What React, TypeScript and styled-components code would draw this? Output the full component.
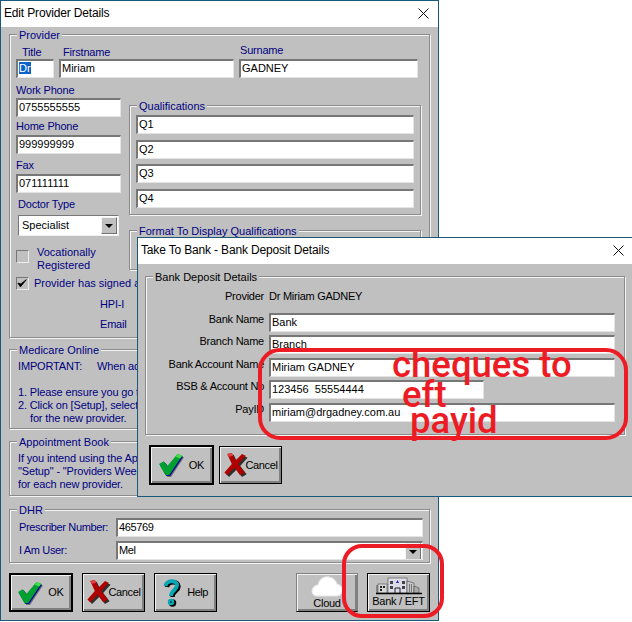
import * as React from 'react';
import styled, { createGlobalStyle } from 'styled-components';

const Page = createGlobalStyle`
  html, body {
    margin: 0;
    padding: 0;
    background: #fff;
    overflow: hidden;
  }
  body {
    font-family: "Liberation Sans", Arial, sans-serif;
    font-size: 11px;
    line-height: 13px;
  }
`;

const Desktop = styled.div`
  position: relative;
  width: 632px;
  height: 622px;
  overflow: hidden;
  background: #fff;
`;

const Win = styled.div<{ $x: number; $y: number; $w: number; $h: number }>`
  position: absolute;
  left: ${({ $x }) => $x}px;
  top: ${({ $y }) => $y}px;
  width: ${({ $w }) => $w}px;
  height: ${({ $h }) => $h}px;
  box-sizing: border-box;
  border: 1px solid #1a5a78;
  background: #c0c0c0;
  display: flex;
  flex-direction: column;
`;

const TitleBar = styled.div`
  box-sizing: border-box;
  flex: 0 0 26px;
  background: #fff;
  color: #000;
  display: flex;
  align-items: center;
  justify-content: space-between;
  padding: 0 9px 2px 3px;
  font-size: 12px;
  letter-spacing: -0.16px;
`;

const MainBody = styled.div`
  display: flex;
  flex-direction: column;
  padding: 7px 8px 0 8px;
`;

const Group = styled.div<{ $h: number; $gap?: number; $ink?: string }>`
  position: relative;
  box-sizing: border-box;
  height: ${({ $h }) => $h}px;
  margin-top: ${({ $gap }) => $gap || 0}px;
  border: 1px solid #8c8c8c;
  box-shadow: inset 1px 1px 0 #f4f4f4, 1px 1px 0 #f4f4f4;
  color: ${({ $ink }) => $ink || '#000080'};
`;

const Legend = styled.span`
  position: absolute;
  left: 7px;
  top: -6px;
  padding: 0 2px;
  background: #c0c0c0;
  white-space: nowrap;
`;

const NameRow = styled.div`
  display: flex;
  align-items: flex-end;
  gap: 5px;
  padding: 9px 0 0 6px;
`;

const NameCol = styled.div<{ $w: number }>`
  width: ${({ $w }) => $w}px;
  flex: none;
`;

const Caption = styled.div<{ $indent?: number; $above?: number; $below?: number }>`
  height: 13px;
  margin: ${({ $above }) => $above || 0}px 0 ${({ $below }) => $below || 0}px ${({ $indent }) => $indent || 0}px;
  letter-spacing: -0.2px;
  white-space: nowrap;
`;

const Field = styled.div<{ $w?: number; $h?: number }>`
  box-sizing: border-box;
  width: ${({ $w }) => ($w ? `${$w}px` : '100%')};
  height: ${({ $h }) => $h || 19}px;
  flex: none;
  border-style: solid;
  border-width: 2px 1px 1px 2px;
  border-color: #777 #e4e4e4 #e4e4e4 #777;
  background: #fff;
  color: #000;
  padding: 1px 0 0 1px;
  white-space: nowrap;
  overflow: hidden;
  position: relative;
`;

const Selected = styled.span`
  background: #0a64c8;
  color: #fff;
`;

const Columns = styled.div`
  display: flex;
  padding: 6px 0 0 6px;
`;

const LeftCol = styled.div`
  width: 113px;
  flex: none;
`;

const RightCol = styled.div`
  width: 292px;
  padding-top: 21px;
`;

const QualList = styled.div`
  display: flex;
  flex-direction: column;
  gap: 5.67px;
  padding: 9px 6px 0;
`;

const DropBox = styled.div`
  box-sizing: border-box;
  width: 101px;
  height: 21px;
  margin-left: 2px;
  border-style: solid;
  border-width: 1px;
  border-color: #777 #f0f0f0 #f0f0f0 #777;
  background: #fff;
  color: #000;
  display: flex;
  align-items: center;
  justify-content: space-between;
  padding-left: 3px;
  padding-right: 1px;
`;

const DropButton = styled.div<{ $w?: number }>`
  box-sizing: border-box;
  width: ${({ $w }) => $w || 16}px;
  height: 17px;
  background: #c0c0c0;
  border-style: solid;
  border-width: 1px;
  border-color: #f4f4f4 #707070 #707070 #f4f4f4;
  display: flex;
  align-items: center;
  justify-content: center;
  &::after {
    content: '';
    border-style: solid;
    border-width: 4px 4px 0;
    border-color: #000 transparent transparent;
  }
`;

const CheckRow = styled.div<{ $above: number; $gap: number; $align: string }>`
  display: flex;
  align-items: ${({ $align }) => $align};
  gap: ${({ $gap }) => $gap}px;
  margin-top: ${({ $above }) => $above}px;
  white-space: nowrap;
`;

const CheckBox = styled.div<{ $raise?: number }>`
  box-sizing: border-box;
  width: 13px;
  height: 13px;
  flex: none;
  margin-top: ${({ $raise }) => $raise || 0}px;
  border-style: solid;
  border-width: 1px;
  border-color: #777 #eee #eee #777;
  display: flex;
  align-items: center;
  justify-content: center;
`;

const HpiRow = styled.div<{ $top: number }>`
  display: flex;
  align-items: center;
  margin-top: ${({ $top }) => $top}px;
  padding-left: 90px;
`;

const HpiLabel = styled.div`
  width: 37px;
  letter-spacing: -0.2px;
`;

const Notes = styled.div`
  padding: 10px 0 0 8px;
  letter-spacing: -0.15px;
  white-space: nowrap;
`;

const NoteLine = styled.div<{ $indent?: number }>`
  height: 13px;
  padding-left: ${({ $indent }) => $indent || 0}px;
`;

const TabSpan = styled.span`
  display: inline-block;
  width: 79px;
`;

const DhrGrid = styled.div`
  display: grid;
  grid-template-columns: 97px 307px;
  grid-auto-rows: 19px;
  row-gap: 4px;
  align-items: center;
  padding: 8px 0 0 9px;
  letter-spacing: -0.35px;
`;

const FieldEnd = styled.div`
  position: absolute;
  right: 1px;
  top: 0;
`;

const ActionRow = styled.div<{ $pad?: number; $top: number; $gap: number }>`
  display: flex;
  align-items: center;
  gap: ${({ $gap }) => $gap}px;
  margin-top: ${({ $top }) => $top}px;
  padding-left: ${({ $pad }) => $pad || 0}px;
`;

const Btn = styled.div<{ $w: number; $h?: number; $main?: boolean; $dim?: boolean; $stack?: boolean; $push?: boolean }>`
  box-sizing: border-box;
  width: ${({ $w }) => $w}px;
  height: ${({ $h }) => $h || 39}px;
  flex: none;
  margin-left: ${({ $push }) => ($push ? 'auto' : 0)};
  background: #c0c0c0;
  color: #000;
  border: ${({ $main }) => ($main ? 2 : 1)}px solid #000;
  border-color: ${({ $dim }) => ($dim ? '#808080 #808080 #000 #808080' : '#000')};
  box-shadow: inset 1px 1px 0 #f2f2f2, inset -2px -2px 0 #808080;
  display: flex;
  flex-direction: ${({ $stack }) => ($stack ? 'column' : 'row')};
  align-items: center;
  justify-content: center;
  gap: ${({ $stack }) => ($stack ? 0 : 2)}px;
  letter-spacing: -0.25px;
  white-space: nowrap;
`;

const OkLabel = styled.span`
  margin-left: 3px;
`;

const CancelLabel = styled.span`
  margin-left: -4px;
  letter-spacing: -0.4px;
`;

const HelpLabel = styled.span`
  margin-left: 4px;
  letter-spacing: -0.5px;
`;

const BankGroupWrap = styled.div`
  padding: 12px 8px 0 7px;
`;

const BankGrid = styled.div`
  display: grid;
  grid-template-columns: 118px 346px;
  grid-auto-rows: 19px;
  column-gap: 5px;
  row-gap: 3.5px;
  padding-top: 13px;
`;

const BankLabel = styled.div`
  text-align: right;
  letter-spacing: -0.25px;
  white-space: nowrap;
`;

const BankValue = styled.div`
  letter-spacing: -0.25px;
  white-space: nowrap;
`;

const Ring = styled.div<{ $x: number; $y: number; $w: number; $h: number; $r: number }>`
  position: absolute;
  left: ${({ $x }) => $x}px;
  top: ${({ $y }) => $y}px;
  width: ${({ $w }) => $w}px;
  height: ${({ $h }) => $h}px;
  box-sizing: border-box;
  border: 4px solid #ed1c24;
  border-radius: ${({ $r }) => $r}px;
`;

const Scrawl = styled.div<{ $x: number; $y: number }>`
  position: absolute;
  left: ${({ $x }) => $x}px;
  top: ${({ $y }) => $y}px;
  font-family: Roboto, "Noto Sans", sans-serif;
  font-size: 36.5px;
  line-height: 36px;
  font-weight: 500;
  color: #ed1c24;
  white-space: nowrap;
`;

const CloseIcon = () => (
  <svg width="11" height="11" viewBox="0 0 11 11">
    <path d="M0.5 0.5L10.5 10.5M10.5 0.5L0.5 10.5" stroke="#111" strokeWidth="1" fill="none" />
  </svg>
);

const TickMark = () => (
  <svg width="13" height="11" viewBox="0 0 13 11">
    <path d="M1 5L4 9.5L11 1L4.5 6Z" fill="#000" stroke="#000" strokeWidth="1" />
  </svg>
);

const tickShape = '0,12 5,9 9,14 20,1 25,3 11,24 7,24';

const OkIcon = () => (
  <svg width="25" height="24" viewBox="0 0 27 26">
    <polygon points={tickShape} transform="translate(2 2)" fill="#707070" />
    <polygon points={tickShape} transform="translate(1 1)" fill="#0000a0" />
    <polygon points={tickShape} fill="#00a030" />
    <path d="M20 1L25 3L23 6L18 4Z" fill="#40e040" />
  </svg>
);

const crossShape = '3,1 8,0 12,8 19,1 23,3 15,12 22,21 17,24 11,16 3,24 0,21 8,12';

const CancelIcon = () => (
  <svg width="24" height="25" viewBox="0 0 25 27">
    <polygon points={crossShape} transform="translate(2 2)" fill="#303030" />
    <polygon points={crossShape} fill="#b00000" />
    <path d="M3 1L8 0L9.5 3L5 4Z" fill="#e04040" />
  </svg>
);

const HelpIcon = () => (
  <svg width="18" height="28" viewBox="0 0 18 28">
    <g fill="none" strokeWidth="4.5" transform="translate(1.5 1)">
      <path d="M2.5 7C3 1 14 0.5 14 6.5C14 11 8 11 8 17" stroke="#000" />
      <circle cx="8" cy="23" r="1.5" stroke="#000" />
    </g>
    <g fill="none" strokeWidth="4">
      <path d="M2.5 7C3 1 14 0.5 14 6.5C14 11 8 11 8 17" stroke="#0aa6b4" />
      <circle cx="8" cy="23" r="1.2" stroke="#0aa6b4" />
    </g>
  </svg>
);

const CloudIcon = () => (
  <svg width="32" height="21" viewBox="0 0 32 21">
    <path
      d="M6 20C1 20 0 15 2 12C3 10 5 9 7 9C8 3 13 0 18 1C23 2 25 5 26 8C30 9 32 12 31 16C30 19 28 20 26 20Z"
      fill="#fff"
      stroke="#e6e6e6"
      strokeWidth="1"
    />
  </svg>
);

const BankIcon = () => (
  <svg width="46" height="18" viewBox="0 0 46 18">
    <rect x="0" y="8" width="5" height="8" fill="#888" />
    <rect x="2" y="7" width="9" height="9" fill="#d8d8d8" stroke="#333" strokeWidth="0.5" />
    <rect x="4" y="9" width="2" height="2" fill="#222" />
    <rect x="7" y="9" width="2" height="2" fill="#222" />
    <rect x="4" y="12" width="2" height="2" fill="#222" />
    <rect x="12" y="1" width="19" height="15" fill="#dcdce8" stroke="#333" strokeWidth="0.5" />
    <path d="M21.5 3L23 6H20Z" fill="#2020c0" />
    <rect x="14" y="4" width="3" height="3" fill="#444" />
    <rect x="26" y="4" width="3" height="3" fill="#444" />
    <rect x="14" y="9" width="3" height="3" fill="#444" />
    <rect x="26" y="9" width="3" height="3" fill="#444" />
    <path d="M19 16V11H24V16" fill="none" stroke="#222" strokeWidth="1" />
    <path d="M31 4L38 6V16H31Z" fill="#c8c8c8" stroke="#333" strokeWidth="0.5" />
    <path d="M33 8H37M33 10H37M33 12H37M33 14H37" stroke="#222" strokeWidth="1" strokeDasharray="1 1" />
    <path d="M38 9L43 11V16H38Z" fill="#aaa" stroke="#333" strokeWidth="0.5" />
    <path d="M0 16.5H46" stroke="#000" strokeWidth="1.4" />
  </svg>
);

const App = () => (
  <Desktop>
    <Page />

    <Win $x={0} $y={0} $w={439} $h={621}>
      <TitleBar>
        Edit Provider Details
        <CloseIcon />
      </TitleBar>
      <MainBody>
        <Group $h={304}>
          <Legend>Provider</Legend>
          <NameRow>
            <NameCol $w={38}>
              <Caption $indent={6}>Title</Caption>
              <Field><Selected>Dr</Selected></Field>
            </NameCol>
            <NameCol $w={175}>
              <Caption $indent={4}>Firstname</Caption>
              <Field>Miriam</Field>
            </NameCol>
            <NameCol $w={179}>
              <Caption $indent={1} $below={2}>Surname</Caption>
              <Field>GADNEY</Field>
            </NameCol>
          </NameRow>
          <Columns>
            <LeftCol>
              <Caption $below={1}>Work Phone</Caption>
              <Field $w={105}>0755555555</Field>
              <Caption $above={3} $below={2}>Home Phone</Caption>
              <Field $w={105}>999999999</Field>
              <Caption $above={5} $below={2}>Fax</Caption>
              <Field $w={105}>071111111</Field>
              <Caption $indent={2} $above={5} $below={4}>Doctor Type</Caption>
              <DropBox>
                Specialist
                <DropButton />
              </DropBox>
              <CheckRow $above={10} $gap={8} $align="flex-start">
                <CheckBox $raise={4} />
                <div>
                  Vocationally
                  <br />
                  Registered
                </div>
              </CheckRow>
              <CheckRow $above={5} $gap={5} $align="center">
                <CheckBox><TickMark /></CheckBox>
                <span>Provider has signed a</span>
              </CheckRow>
            </LeftCol>
            <RightCol>
              <Group $h={110}>
                <Legend>Qualifications</Legend>
                <QualList>
                  <Field>Q1</Field>
                  <Field>Q2</Field>
                  <Field>Q3</Field>
                  <Field>Q4</Field>
                </QualList>
              </Group>
              <Group $h={40} $gap={15}>
                <Legend>Format To Display Qualifications</Legend>
              </Group>
            </RightCol>
          </Columns>
          <HpiRow $top={5}>
            <HpiLabel>HPI-I</HpiLabel>
            <Field $w={277} />
          </HpiRow>
          <HpiRow $top={1}>
            <HpiLabel>Email</HpiLabel>
            <Field $w={277} />
          </HpiRow>
        </Group>

        <Group $h={80} $gap={11}>
          <Legend>Medicare Online</Legend>
          <Notes>
            <NoteLine><TabSpan>IMPORTANT:</TabSpan>When adding</NoteLine>
            <NoteLine />
            <NoteLine>1. Please ensure you go to</NoteLine>
            <NoteLine>2. Click on [Setup], select</NoteLine>
            <NoteLine $indent={12}>for the new provider.</NoteLine>
          </Notes>
        </Group>

        <Group $h={55} $gap={12}>
          <Legend>Appointment Book</Legend>
          <Notes>
            <NoteLine>If you intend using the Appointment</NoteLine>
            <NoteLine>"Setup" - "Providers Week</NoteLine>
            <NoteLine>for each new provider.</NoteLine>
          </Notes>
        </Group>

        <Group $h={54} $gap={13}>
          <Legend>DHR</Legend>
          <DhrGrid>
            <span>Prescriber Number:</span>
            <Field>465769</Field>
            <span>I Am User:</span>
            <Field>
              Mel
              <FieldEnd><DropButton /></FieldEnd>
            </Field>
          </DhrGrid>
        </Group>

        <ActionRow $top={10} $gap={9}>
          <Btn $w={64} $main>
            <OkIcon />
            <OkLabel>OK</OkLabel>
          </Btn>
          <Btn $w={63}>
            <CancelIcon />
            <CancelLabel>Cancel</CancelLabel>
          </Btn>
          <Btn $w={63}>
            <HelpIcon />
            <HelpLabel>Help</HelpLabel>
          </Btn>
          <Btn $w={62} $dim $stack $push>
            <CloudIcon />
            Cloud
          </Btn>
          <Btn $w={63} $stack>
            <BankIcon />
            Bank / EFT
          </Btn>
        </ActionRow>
      </MainBody>
    </Win>

    <Win $x={137} $y={237} $w={497} $h={260}>
      <TitleBar>
        Take To Bank - Bank Deposit Details
        <CloseIcon />
      </TitleBar>
      <BankGroupWrap>
        <Group $h={159} $ink="#000">
          <Legend>Bank Deposit Details</Legend>
          <BankGrid>
            <BankLabel>Provider</BankLabel>
            <BankValue>Dr Miriam GADNEY</BankValue>
            <BankLabel>Bank Name</BankLabel>
            <Field>Bank</Field>
            <BankLabel>Branch Name</BankLabel>
            <Field>Branch</Field>
            <BankLabel>Bank Account Name</BankLabel>
            <Field>Miriam GADNEY</Field>
            <BankLabel>BSB &amp; Account No</BankLabel>
            <Field $w={215}>123456&nbsp;&nbsp;55554444</Field>
            <BankLabel>PayID</BankLabel>
            <Field>miriam@drgadney.com.au</Field>
          </BankGrid>
        </Group>
      </BankGroupWrap>
      <ActionRow $pad={11} $top={10} $gap={5}>
        <Btn $w={65} $h={40} $main>
          <OkIcon />
          <OkLabel>OK</OkLabel>
        </Btn>
        <Btn $w={63} $h={38}>
          <CancelIcon />
          <CancelLabel>Cancel</CancelLabel>
        </Btn>
      </ActionRow>
    </Win>

    <Ring $x={258} $y={348} $w={370} $h={92} $r={22} />
    <Ring $x={342} $y={544} $w={102} $h={74} $r={20} />
    <Scrawl $x={392} $y={347}>cheques to</Scrawl>
    <Scrawl $x={402} $y={377}>eft</Scrawl>
    <Scrawl $x={410} $y={403}>payid</Scrawl>
  </Desktop>
);

export default App;
